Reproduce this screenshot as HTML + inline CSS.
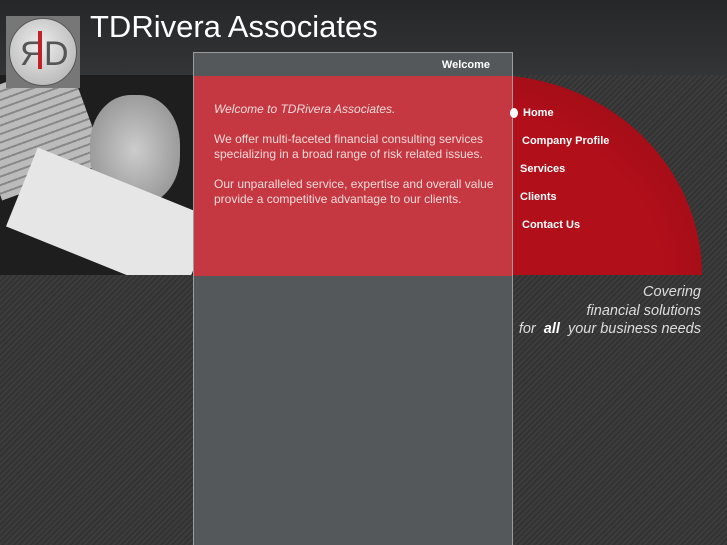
<!DOCTYPE html>
<html><head><style>
html,body{margin:0;width:727px;height:545px;overflow:hidden;}
body{position:relative;font-family:"Liberation Sans",sans-serif;
background:repeating-linear-gradient(135deg,#3c3c3c 0 2px,#333 2px 4px);}
.hdr{position:absolute;left:0;top:0;width:727px;height:75px;background:linear-gradient(#262729,#333436);}
.title{position:absolute;left:90px;top:9px;color:#fff;font-size:31px;}
.logo{position:absolute;left:6px;top:16px;width:74px;height:72px;background:#777;}
.logo .c{position:absolute;left:3px;top:2px;width:66px;height:66px;border-radius:50%;background:radial-gradient(circle at 45% 40%,#eee,#aaa);border:1px solid #555;}
.photo{position:absolute;left:0;top:75px;width:194px;height:200px;overflow:hidden;background:#1e1e1e;}
.kb{position:absolute;left:-20px;top:0;width:110px;height:110px;background:repeating-linear-gradient(0deg,#bbb 0 6px,#888 6px 8px);transform:rotate(-20deg);}
.hand{position:absolute;left:90px;top:20px;width:90px;height:110px;border-radius:45%;background:radial-gradient(#ccc,#888);}
.paper{position:absolute;left:15px;top:105px;width:190px;height:85px;background:#e6e6e6;transform:rotate(22deg);}
.red{position:absolute;left:278px;top:75px;width:424px;height:400px;border-radius:50%;background:radial-gradient(ellipse at 40% 50%,#b10f1a 60%,#8c0a12 100%);clip-path:inset(0 0 200px 0);}
.panel{position:absolute;left:193px;top:52px;width:318px;height:492px;background:#55585b;border:1px solid #9a9c9e;border-bottom:0;}
.pred{position:absolute;left:0;top:23px;width:318px;height:200px;background:#c53841;}
.wel{position:absolute;right:22px;top:6px;color:#fff;font-weight:bold;font-size:11px;}
.txt{position:absolute;left:20px;top:49px;width:290px;color:#f4dada;font-size:12px;line-height:15px;}
.nav{position:absolute;color:#fff;font-weight:bold;font-size:11px;}
.slog{position:absolute;right:26px;top:283px;color:#ddd;font-style:italic;font-size:14.5px;text-align:right;line-height:18.5px;}
</style></head><body>
<div class="hdr"></div>
<div class="red"></div>
<div class="photo"><div class="kb"></div><div class="hand"></div><div class="paper"></div></div>
<div class="logo"><div class="c"><span style="position:absolute;left:10px;top:16px;font-size:34px;color:#555">&#1071;</span><span style="position:absolute;left:28px;top:12px;width:4px;height:38px;background:#c0202a"></span><span style="position:absolute;left:34px;top:16px;font-size:34px;color:#555">D</span></div></div>
<div class="title">TDRivera Associates</div>
<div class="panel"><div class="pred"></div><div class="wel">Welcome</div>
<div class="txt"><i>Welcome to TDRivera Associates.</i><br><br>We offer multi-faceted financial consulting services specializing in a broad range of risk related issues.<br><br>Our unparalleled service, expertise and overall value provide a competitive advantage to our clients.</div></div>
<div style="position:absolute;left:510px;top:108px;width:8px;height:10px;border-radius:50%;background:#fff"></div>
<div class="nav" style="left:523px;top:107px">Home</div>
<div class="nav" style="left:522px;top:135px">Company Profile</div>
<div class="nav" style="left:520px;top:163px">Services</div>
<div class="nav" style="left:520px;top:191px">Clients</div>
<div class="nav" style="left:522px;top:219px">Contact Us</div>
<div class="slog">Covering<br>financial solutions<br>for <b style="color:#fff">&nbsp;all&nbsp;</b> your business needs</div>
</body></html>
